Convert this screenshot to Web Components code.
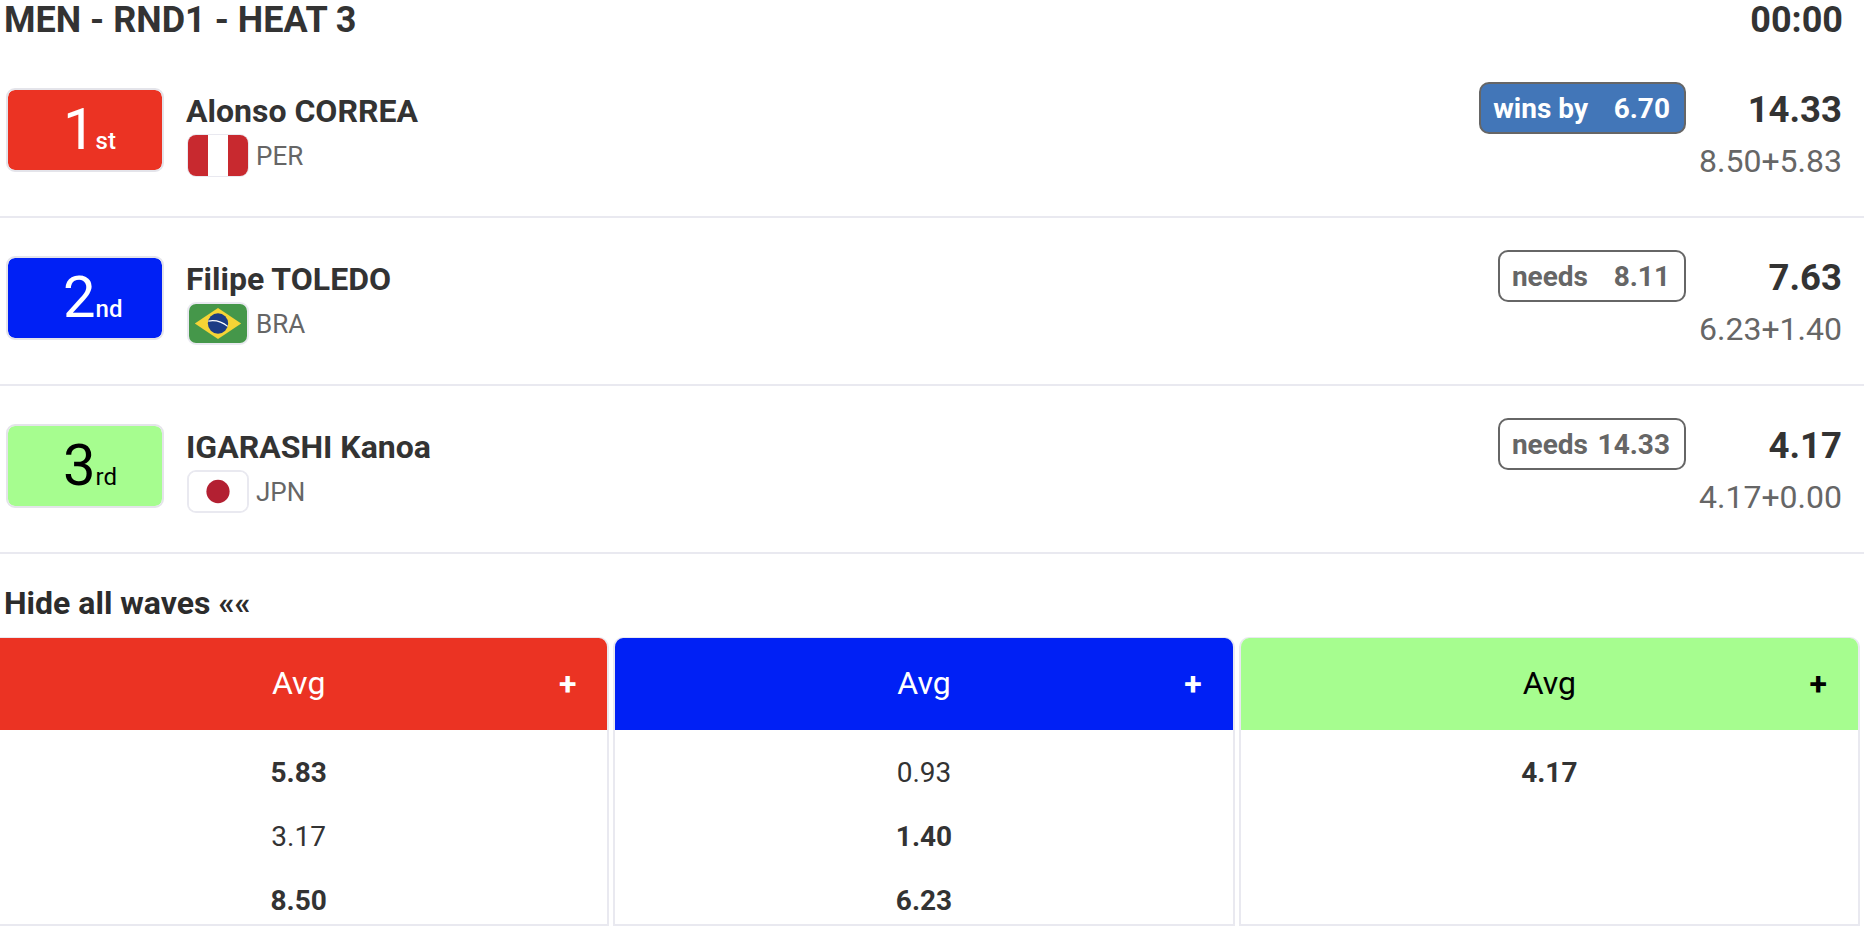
<!DOCTYPE html>
<html lang="en"><head><meta charset="utf-8"><title>Heat</title>
<style>
html,body{margin:0;height:932px;overflow:hidden;background:#fff;font-family:Roboto,"Liberation Sans",sans-serif;color:#333}
heat-board{display:block;width:1864px}
</style></head><body>
<heat-board></heat-board>
<template id="flag-per"><svg viewBox="0 0 60 40" width="60" height="41" preserveAspectRatio="none"><rect width="20" height="40" fill="#c8292f"/><rect x="20" width="20" height="40" fill="#fff"/><rect x="40" width="20" height="40" fill="#c8292f"/></svg></template>
<template id="flag-bra"><svg viewBox="0 0 60 40" width="58" height="39" preserveAspectRatio="none"><rect width="60" height="40" fill="#45974a"/><polygon points="30,4 54,20 30,36 6,20" fill="#f5d436"/><circle cx="30" cy="20" r="10.5" fill="#1c3c85"/><path d="M20 17.5C26 16.5 34 18 40 23" stroke="#fff" stroke-width="1.2" fill="none"/></svg></template>
<template id="flag-jpn"><svg viewBox="0 0 60 40" width="58" height="39" preserveAspectRatio="none"><rect width="60" height="40" fill="#fff"/><circle cx="30" cy="20" r="12" fill="#b32032"/></svg></template>
<script>
class RankBadge extends HTMLElement{constructor(){super();const s=this.attachShadow({mode:'open'});
const o=this.getAttribute('o');
s.innerHTML=`<style>:host{display:block;box-sizing:border-box;flex:none;width:158px;height:84px;padding-left:55px;border:2px solid #e4e4ea;background-clip:padding-box;border-radius:9px;background-color:var(--bg);color:var(--fg);font-size:58px;line-height:78px;white-space:nowrap}
.o{font-size:24px;font-weight:${o=='rd'?400:500}}</style><span>${this.getAttribute('n')}</span><span class="o">${o}</span>`}}
customElements.define('rank-badge',RankBadge);
class FlagIcon extends HTMLElement{constructor(){super();const s=this.attachShadow({mode:'open'});
s.innerHTML=`<style>:host{display:block;flex:none;box-sizing:border-box;width:62px;height:43px;margin-left:1px;border:2px solid #e9e9f0;border-radius:9px;overflow:hidden;line-height:0}:host([code=per]){border-width:1px}svg{display:block}</style>`;
s.appendChild(document.getElementById('flag-'+this.getAttribute('code')).content.cloneNode(true))}}
customElements.define('flag-icon',FlagIcon);
class DiffBadge extends HTMLElement{constructor(){super();const s=this.attachShadow({mode:'open'});
s.innerHTML=`<style>:host{display:flex;box-sizing:border-box;height:52px;align-items:center;padding:0 14px 0 12px;border:2px solid #666;border-radius:10px;font-size:28px;font-weight:700;color:#666;white-space:nowrap;margin-top:-6px}
:host([win]){background:#4276b8;color:#fff}.v{width:82px;text-align:right}</style><span>${this.getAttribute('label')}</span><span class="v">${this.getAttribute('value')}</span>`}}
customElements.define('diff-badge',DiffBadge);
class AthleteRow extends HTMLElement{constructor(){super();const a=k=>this.getAttribute(k);const s=this.attachShadow({mode:'open'});
s.innerHTML=`<style>:host{display:flex;box-sizing:border-box;height:168px;padding:38px 22px 0 6px;border-bottom:2px solid #e9e9f0;--bg:${a('bg')};--fg:${a('fg')}}
.who{margin-left:22px;flex:1;min-width:0}.name{font-size:32px;font-weight:700;line-height:46px;height:46px;color:#333}
.c{display:flex;align-items:center;gap:7px;font-size:26px;color:#666}
.score{width:156px;text-align:right}.t{font-size:36.5px;font-weight:700;line-height:44px;color:#333}.w{font-size:32px;color:#666;line-height:44px;margin-top:7px}
</style><rank-badge n="${a('n')}" o="${a('o')}"></rank-badge>
<div class="who"><div class="name">${a('name')}</div><div class="c"><flag-icon code="${a('code')}"></flag-icon><span>${a('code').toUpperCase()}</span></div></div>
<diff-badge label="${a('dl')}" value="${a('dv')}" ${a('win')!==null?'win':''}></diff-badge>
<div class="score"><div class="t">${a('total')}</div><div class="w">${a('waves')}</div></div>`}}
customElements.define('athlete-row',AthleteRow);
class WaveColumn extends HTMLElement{constructor(){super();const s=this.attachShadow({mode:'open'});
const rows=(this.getAttribute('waves')||'').split(',').map(v=>{const b=v[0]=='*';return `<div class="r${b?' b':''}">${b?v.slice(1):v}</div>`}).join('');
s.innerHTML=`<style>:host{display:flex;flex-direction:column;box-sizing:border-box;height:289px;border:2px solid #e9e9f0;border-top-width:1px;border-radius:10px 10px 0 0;overflow:hidden}
.h{position:relative;flex:none;height:92px;display:flex;align-items:center;justify-content:center;background:${this.getAttribute('bg')};color:${this.getAttribute('fg')};font-size:32px;padding-bottom:3px;box-sizing:border-box}
.p{position:absolute;right:31px;top:27px;font-size:32px;font-weight:700}
.rows{padding-top:11px;flex:1;background:#fff}
.r{height:64px;line-height:64px;text-align:center;font-size:28px;color:#333}.b{font-weight:700}</style>
<div class="h"><span>Avg</span><span class="p">+</span></div><div class="rows">${rows}</div>`}}
customElements.define('wave-column',WaveColumn);
class HeatBoard extends HTMLElement{constructor(){super();const s=this.attachShadow({mode:'open'});
s.innerHTML=`<style>:host{display:block}
.top{display:flex;justify-content:space-between;height:50px;padding:0 21px 0 4px;font-size:36px;font-weight:700;line-height:40px;color:#333}
.hide{font-size:32px;font-weight:700;line-height:40px;padding:29px 0 0 4px;height:54px;color:#2c2c2c}
.grid{display:grid;grid-template-columns:repeat(3,1fr);gap:4px;width:1872px;margin-left:-12px}</style>
<div class="top"><span>MEN - RND1 - HEAT 3</span><span>00:00</span></div>
<athlete-row n="1" o="st" name="Alonso CORREA" code="per" bg="#eb3323" fg="#fff" dl="wins by" dv="6.70" win total="14.33" waves="8.50+5.83"></athlete-row>
<athlete-row n="2" o="nd" name="Filipe TOLEDO" code="bra" bg="#0020f5" fg="#fff" dl="needs" dv="8.11" total="7.63" waves="6.23+1.40"></athlete-row>
<athlete-row n="3" o="rd" name="IGARASHI Kanoa" code="jpn" bg="#a6fd8f" fg="#000" dl="needs" dv="14.33" total="4.17" waves="4.17+0.00"></athlete-row>
<div class="hide">Hide all waves ««</div>
<div class="grid"><wave-column bg="#eb3323" fg="#fff" waves="*5.83,3.17,*8.50"></wave-column><wave-column bg="#0020f5" fg="#fff" waves="0.93,*1.40,*6.23"></wave-column><wave-column bg="#a6fd8f" fg="#000" waves="*4.17"></wave-column></div>`}}
customElements.define('heat-board',HeatBoard);
</script></body></html>
